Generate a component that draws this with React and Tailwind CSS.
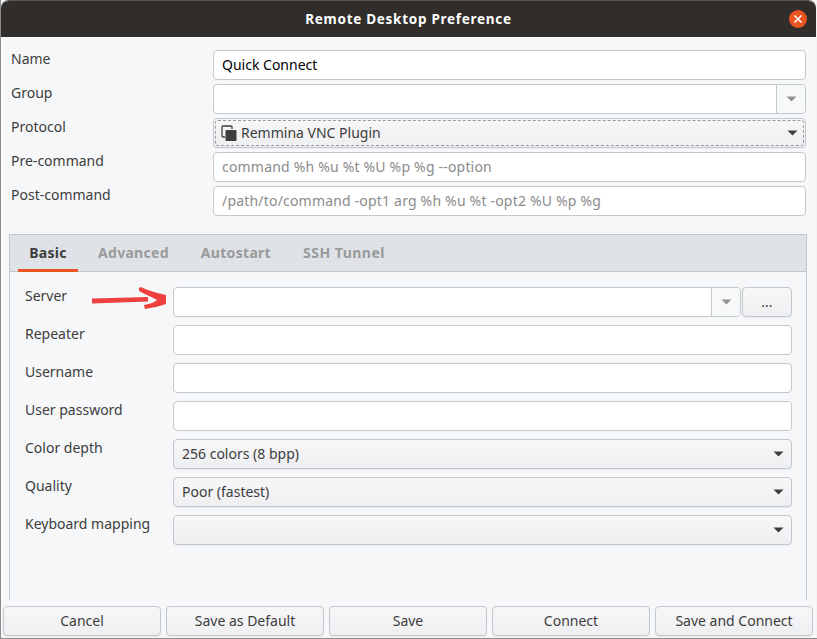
const font = { fontFamily: '"Noto Sans", "Open Sans", sans-serif' };

function Caret({ light }) {
  return (
    <svg width="11" height="6" viewBox="0 0 11 6" className="block">
      <path d="M0.5 0.5h10L5.5 5.5z" fill={light ? "#929292" : "#3d3d3d"} />
    </svg>
  );
}

function Entry({ value, placeholder, className = "" }) {
  return (
    <div className={`h-[30px] flex items-center rounded-[4px] border border-[#c3c8cf] bg-white px-2 pb-[2px] text-[14px] text-black min-w-0 ${className}`}>
      {value}
      {placeholder && <span className="text-[#8b8b8b] whitespace-nowrap tracking-[0.19px]">{placeholder}</span>}
    </div>
  );
}

function ComboEntry({ className = "" }) {
  return (
    <div className={`h-[30px] flex rounded-[4px] border border-[#c3c8cf] bg-white overflow-hidden ${className}`}>
      <div className="flex-1" />
      <div className="w-[29px] border-l border-[#c3c8cf] bg-[#f7f8f8] flex items-center justify-center">
        <Caret light />
      </div>
    </div>
  );
}

function Select({ children, focus }) {
  return (
    <div className="h-[30px] flex items-center justify-between rounded-[4px] border border-[#c3c8cf] bg-gradient-to-b from-[#f7f7f8] to-[#eeeff1] px-2 text-[14px] text-[#3d3d3d] shadow-[0_1px_1px_rgba(0,0,0,0.05)] relative">
      {focus && <div className="absolute inset-[1px] rounded-[3px] border border-dashed border-[#9a9a9a]" />}
      <div className="flex items-center gap-[4px] min-w-0 pb-[2px]">{children}</div>
      <div className="mr-[-1px]"><Caret /></div>
    </div>
  );
}

function Button({ children, className = "" }) {
  return (
    <div className={`h-[30px] flex items-center justify-center rounded-[4px] border border-[#c3c8cf] bg-gradient-to-b from-[#f7f7f8] to-[#eeeff1] pb-[1px] text-[14px] text-[#3d3d3d] shadow-[0_1px_1px_rgba(0,0,0,0.06)] ${className}`}>
      {children}
    </div>
  );
}

function Row({ label, labelW, children }) {
  return (
    <div className="flex items-start">
      <div className="text-[14px] leading-[18px] text-[#3d3d3d] shrink-0" style={{ width: labelW }}>{label}</div>
      <div className="flex-1 min-w-0">{children}</div>
    </div>
  );
}

export default function App() {
  return (
    <div className="relative w-[817px] h-[639px] bg-[#f4f5f7] overflow-hidden border-b border-[#8d8d8d] border-l" style={font}>
      <div className="absolute left-[-1px] top-0 w-[1px] h-[72px] bg-[#2a2826]" />
      <div className="h-[638px] mr-[1px] flex flex-col bg-[#f6f7f9] rounded-t-[8px] overflow-hidden border-t border-[#55524f]">
        <header className="h-[36px] shrink-0 bg-[#302d2b] flex items-center justify-center relative">
          <span className="text-white font-bold text-[13.5px] tracking-[0.72px] pt-[1px]">Remote Desktop Preference</span>
          <div className="absolute right-[9px] top-[9px] w-[18px] h-[18px] rounded-full bg-[#ea5420] flex items-center justify-center">
            <svg width="10" height="10" viewBox="0 0 10 10"><path d="M1.5 1.5l7 7M8.5 1.5l-7 7" stroke="#fff" strokeWidth="1.6" /></svg>
          </div>
        </header>

        <section className="flex flex-col gap-[4px] pt-[13px] pl-[10px] pr-[10px]">
          <Row label="Name" labelW={202}><Entry value="Quick Connect" /></Row>
          <Row label="Group" labelW={202}><ComboEntry /></Row>
          <Row label="Protocol" labelW={202}>
            <Select focus>
              <svg width="16" height="16" viewBox="0 0 16 16" className="shrink-0 ml-[-1px] mt-[2px]">
                <path d="M4 12H2a1 1 0 0 1-1-1V2a1 1 0 0 1 1-1h8a1 1 0 0 1 1 1v2" fill="none" stroke="#3d3d3d" strokeWidth="1.3" />
                <rect x="4.5" y="5" width="11" height="11" rx="1" fill="#3d3d3d" />
              </svg>
              <span>Remmina VNC Plugin</span>
            </Select>
          </Row>
          <Row label="Pre-command" labelW={202}><Entry placeholder="command %h %u %t %U %p %g --option" /></Row>
          <Row label="Post-command" labelW={202}><Entry placeholder="/path/to/command -opt1 arg %h %u %t -opt2 %U %p %g" /></Row>
        </section>

        <section className="relative mt-[18px] ml-[8px] mr-[9px] flex-1 min-h-0 border-l border-r border-t border-[#c3c8cf] mb-[6px] flex flex-col">
          <nav className="h-[37px] shrink-0 bg-[#dfe2e6] border-b border-[#c3c8cf] flex pl-[8px] text-[14px] font-bold tracking-[0.3px]">
            <div className="w-[60px] flex items-center justify-center text-[#3d3d3d] border-b-[3px] border-[#e95420] h-[37px]">Basic</div>
            <div className="ml-[20px] pb-[2px] flex items-center text-[#9a9a9a]">Advanced</div>
            <div className="ml-[32px] pb-[2px] flex items-center text-[#9a9a9a]">Autostart</div>
            <div className="ml-[32px] pb-[2px] flex items-center text-[#9a9a9a] tracking-[0.5px]">SSH Tunnel</div>
          </nav>
          <div className="flex flex-col gap-[8px] pt-[15px] pl-[15px] pr-[14px]">
            <Row label="Server" labelW={148}>
              <div className="flex">
                <ComboEntry className="flex-1" />
                <Button className="w-[50px] ml-[1px]">...</Button>
              </div>
            </Row>
            <Row label="Repeater" labelW={148}><Entry /></Row>
            <Row label="Username" labelW={148}><Entry /></Row>
            <Row label="User password" labelW={148}><Entry /></Row>
            <Row label="Color depth" labelW={148}><Select>256 colors (8 bpp)</Select></Row>
            <Row label="Quality" labelW={148}><Select>Poor (fastest)</Select></Row>
            <Row label="Keyboard mapping" labelW={148}><Select /></Row>
          </div>
          <svg className="absolute left-[82px] top-[50px]" width="76" height="26" viewBox="0 0 76 26">
            <path d="M0 13.5 L56 12 L56 16.5 L0 18.5 Z" fill="#ef4040" />
            <path d="M47 3 L49 2 C54 5 62 7 74 10 L74 19 C68 21 60 23 53 24 L52 20 C58 19 63 17 65 15 C60 12 52 9 47 6 Z" fill="#ef4040" />
          </svg>
        </section>

        <footer className="grid grid-cols-5 gap-[5px] pl-[2px] pr-[3px] pb-[2px] shrink-0">
          <Button>Cancel</Button>
          <Button>Save as Default</Button>
          <Button>Save</Button>
          <Button>Connect</Button>
          <Button>Save and Connect</Button>
        </footer>
      </div>
    </div>
  );
}
